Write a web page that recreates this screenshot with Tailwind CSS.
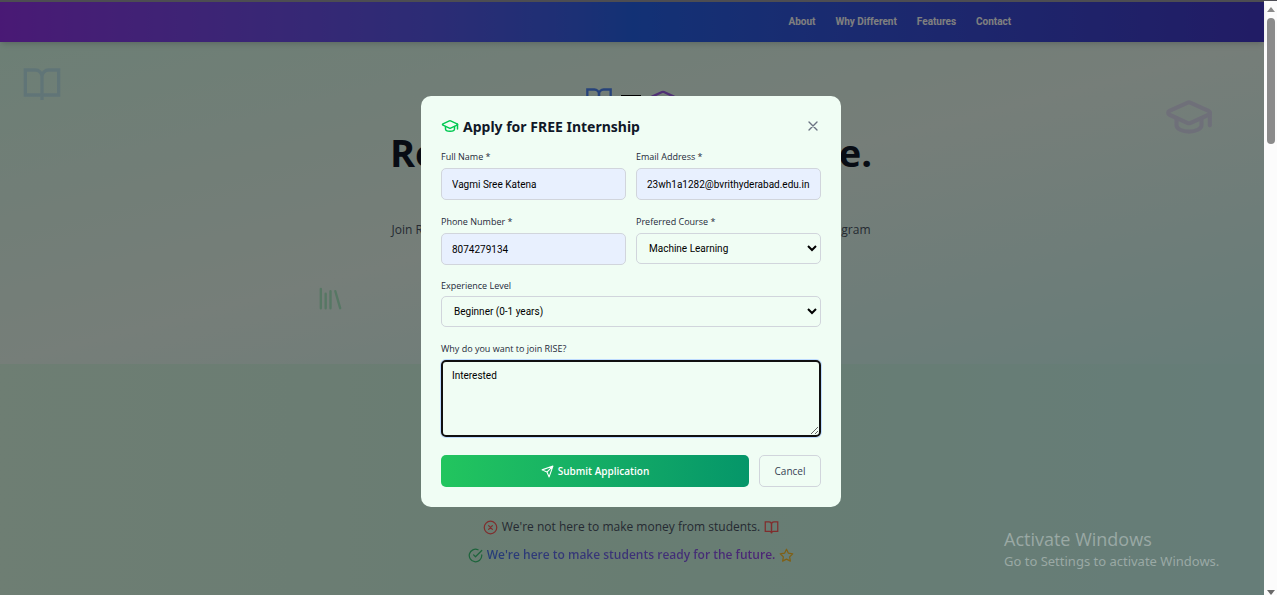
<!DOCTYPE html>
<html lang="en">
<head>
<meta charset="utf-8">
<title>RISE Internship</title>
<script src="https://cdn.jsdelivr.net/npm/@tailwindcss/browser@4"></script>
</head>
<body class="flex h-screen overflow-hidden bg-white font-['Open_Sans',sans-serif]">
<svg class="hidden">
  <defs>
    <g id="book"><path d="M2 3h6a4 4 0 0 1 4 4v14a3 3 0 0 0-3-3H2z"/><path d="M22 3h-6a4 4 0 0 0-4 4v14a3 3 0 0 1 3-3h7z"/></g>
    <g id="cap"><path d="M21.42 10.922a1 1 0 0 0-.019-1.838L12.83 5.18a2 2 0 0 0-1.66 0L2.6 9.08a1 1 0 0 0 0 1.832l8.57 3.908a2 2 0 0 0 1.66 0z"/><path d="M22 10v6"/><path d="M6 12.5V16a6 3 0 0 0 12 0v-3.5"/></g>
  </defs>
</svg>
<div class="relative flex min-w-0 flex-1 flex-col">
  <header class="z-10 flex h-[42px] shrink-0 items-center justify-end border-t-2 border-[#9a9aa4] bg-linear-to-r from-[#9333ea] via-[#2563eb] to-[#4338ca] px-[20%] pb-0.5 font-[Roboto,sans-serif] text-[10px] font-bold text-white shadow-md">
    <nav class="flex gap-5">
      <a href="#about">About</a><a href="#why">Why Different</a><a href="#features">Features</a><a href="#contact">Contact</a>
    </nav>
  </header>
  <section class="relative flex h-[322px] shrink-0 flex-col items-center bg-linear-to-br from-[#dafeeb] via-[#ecfcf2] to-[#cefaf2] pr-0.5 pt-11">
    <svg class="absolute left-[22px] top-[23px] size-10 text-blue-500 opacity-15" viewBox="0 0 24 24" fill="none" stroke="currentColor" stroke-width="2"><path d="M12 7v14M2 3h6a4 4 0 0 1 4 4 4 4 0 0 1 4-4h6v15H2z"/></svg>
    <svg class="absolute right-[50px] top-[50px] size-[50px] text-purple-500 opacity-15" viewBox="0 0 24 24" fill="none" stroke="currentColor" stroke-width="2" stroke-linecap="round" stroke-linejoin="round"><use href="#cap"/></svg>
    <svg class="absolute left-[25%] top-[242px] size-[29px] text-green-500 opacity-25" viewBox="0 0 24 24" fill="none" stroke="currentColor" stroke-width="2" stroke-linecap="round"><path d="m16 6 4 14M12 6v14M8 8v12M4 4v16"/></svg>
    <div class="flex h-7 items-start gap-2">
      <svg class="size-7 text-[#4f86f5]" viewBox="0 0 24 24" fill="none" stroke="currentColor" stroke-width="2"><use href="#book"/></svg>
      <span class="mt-[9px] h-5 w-5 bg-black"></span>
      <svg class="size-7 text-[#a060ea]" viewBox="0 0 24 24" fill="none" stroke="currentColor" stroke-width="2" stroke-linecap="round" stroke-linejoin="round"><use href="#cap"/></svg>
    </div>
    <h1 class="mt-3 flex w-[482px] justify-between text-[38px] font-bold leading-[52px] text-gray-900"><span>Re</span><span>e.</span></h1>
    <p class="mt-[42px] flex w-[479px] justify-between text-[12px] leading-5 text-gray-600"><span>Join R</span><span>program</span></p>
  </section>
  <section class="flex flex-1 flex-col items-center justify-end gap-2 bg-linear-to-r from-[#dcfce7] via-[#d1fae5] to-[#ccfbf1] pb-[30px] pr-0.5">
    <p class="flex items-center gap-1 text-[12px] leading-5 text-gray-600">
      <svg class="size-[15px] text-[#ff5a5a]" viewBox="0 0 24 24" fill="none" stroke="currentColor" stroke-width="2" stroke-linecap="round"><circle cx="12" cy="12" r="10"/><path d="m15 9-6 6M9 9l6 6"/></svg>
      We're not here to make money from students.
      <svg class="size-[15px] text-[#ff5a5a]" viewBox="0 0 24 24" fill="none" stroke="currentColor" stroke-width="2"><use href="#book"/></svg>
    </p>
    <p class="flex items-center gap-1 text-[12px] font-semibold leading-5">
      <svg class="size-[15px] text-[#3cc878]" viewBox="0 0 24 24" fill="none" stroke="currentColor" stroke-width="2" stroke-linecap="round" stroke-linejoin="round"><path d="M22 11.08V12a10 10 0 1 1-5.93-9.14"/><path d="m9 11 3 3L22 4"/></svg>
      <span class="bg-linear-to-r from-[#4a7af0] to-[#9a4aea] bg-clip-text text-transparent">We're here to make students ready for the future.</span>
      <svg class="size-[15px] text-[#ffc02a]" viewBox="0 0 24 24" fill="none" stroke="currentColor" stroke-width="2" stroke-linejoin="round"><path d="m12 2 3.09 6.26L22 9.27l-5 4.87 1.18 6.88L12 17.77l-6.18 3.25L7 14.14 2 9.27l6.91-1.01z"/></svg>
    </p>
  </section>

  <div class="absolute inset-0 z-20 flex items-center justify-center bg-black/50 pr-0.5 pt-2">
    <div role="dialog" aria-labelledby="dialog-title" class="w-[420px] rounded-[10px] bg-[#f0fdf4] p-5">
      <div class="flex h-5 items-center justify-between">
        <h2 id="dialog-title" class="flex items-center gap-1 font-['Noto_Sans',sans-serif] text-[14px] font-bold text-gray-900">
          <svg class="size-[18px] text-green-500" viewBox="0 0 24 24" fill="none" stroke="currentColor" stroke-width="2" stroke-linecap="round" stroke-linejoin="round"><use href="#cap"/></svg>
          Apply for FREE Internship
        </h2>
        <button type="button" aria-label="Close" class="text-gray-500"><svg class="size-4" viewBox="0 0 24 24" fill="none" stroke="currentColor" stroke-width="2" stroke-linecap="round"><path d="M18 6 6 18M6 6l12 12"/></svg></button>
      </div>
      <form class="mt-[14px] text-[10px] text-black">
        <div class="grid grid-cols-2 gap-x-[10px] gap-y-[15px]">
          <div><label for="name" class="mb-[5px] block text-[9px] leading-[13px] text-gray-800">Full Name *</label>
            <input id="name" value="Vagmi Sree Katena" class="block h-8 w-full rounded-[5px] border border-gray-300 bg-[#e8f0fe] px-[10px] font-[Roboto,sans-serif]"></div>
          <div><label for="email" class="mb-[5px] block text-[9px] leading-[13px] text-gray-800">Email Address *</label>
            <input id="email" type="email" value="23wh1a1282@bvrithyderabad.edu.in" class="block h-8 w-full rounded-[5px] border border-gray-300 bg-[#e8f0fe] px-[10px] font-[Roboto,sans-serif]"></div>
          <div><label for="phone" class="mb-[5px] block text-[9px] leading-[13px] text-gray-800">Phone Number *</label>
            <input id="phone" type="tel" value="8074279134" class="block h-8 w-full rounded-[5px] border border-gray-300 bg-[#e8f0fe] px-[10px] font-[Roboto,sans-serif]"></div>
          <div><label for="course" class="mb-[5px] block text-[9px] leading-[13px] text-gray-800">Preferred Course *</label>
            <select id="course" class="block h-[31px] w-full rounded-[5px] border border-gray-300 bg-[#f0fdf4] pl-2 font-[Roboto,sans-serif]"><option>Machine Learning</option></select></div>
        </div>
        <label for="level" class="mb-1 mt-[14px] block text-[9px] leading-[13px] text-gray-800">Experience Level</label>
        <select id="level" class="block h-[31px] w-full rounded-[5px] border border-gray-300 bg-[#f0fdf4] pl-2 font-[Roboto,sans-serif]"><option>Beginner (0-1 years)</option></select>
        <label for="why" class="mb-[5px] mt-[15px] block text-[9px] leading-[13px] text-gray-800">Why do you want to join RISE?</label>
        <textarea id="why" class="block h-[77px] w-full rounded-[5px] border-2 border-[#101010] px-[9px] py-[6px] font-[Roboto,sans-serif] leading-4 ring-1 ring-blue-200">Interested</textarea>
        <div class="mt-[18px] flex gap-[10px]">
          <button type="submit" class="flex h-8 flex-1 items-center justify-center gap-1 rounded-[5px] bg-linear-to-r from-[#22c55e] to-[#059669] font-semibold text-white">
            <svg class="size-[13px]" viewBox="0 0 24 24" fill="none" stroke="currentColor" stroke-width="2" stroke-linecap="round" stroke-linejoin="round"><path d="m22 2-7 20-4-9-9-4ZM22 2 11 13"/></svg>
            Submit Application
          </button>
          <button type="button" class="h-8 w-[62px] rounded-[5px] border border-gray-300 font-medium text-gray-700">Cancel</button>
        </div>
      </form>
    </div>
  </div>
  <aside class="absolute bottom-6 right-[39px] z-30 w-[221px] whitespace-nowrap text-white/35">
    <p class="text-[18px] leading-6">Activate Windows</p>
    <p class="font-['Noto_Sans',sans-serif] text-[13px] leading-5">Go to Settings to activate Windows.</p>
  </aside>
</div>
<div class="flex w-[13px] shrink-0 flex-col items-center border-t border-[#4d4d55] bg-[#fcfcfc]" aria-hidden="true">
  <svg class="mt-[6px] h-[5px] w-2 shrink-0" viewBox="0 0 8 5"><path d="M4 0 8 5H0z" fill="#8a8a8a"/></svg>
  <div class="mt-[6px] h-[126px] w-2 shrink-0 rounded-full bg-[#8b8b8b]"></div>
  <svg class="mt-auto h-[5px] w-2 shrink-0" viewBox="0 0 8 5"><path d="M4 5 8 0H0z" fill="#6a6a6a"/></svg>
</div>
</body>
</html>
